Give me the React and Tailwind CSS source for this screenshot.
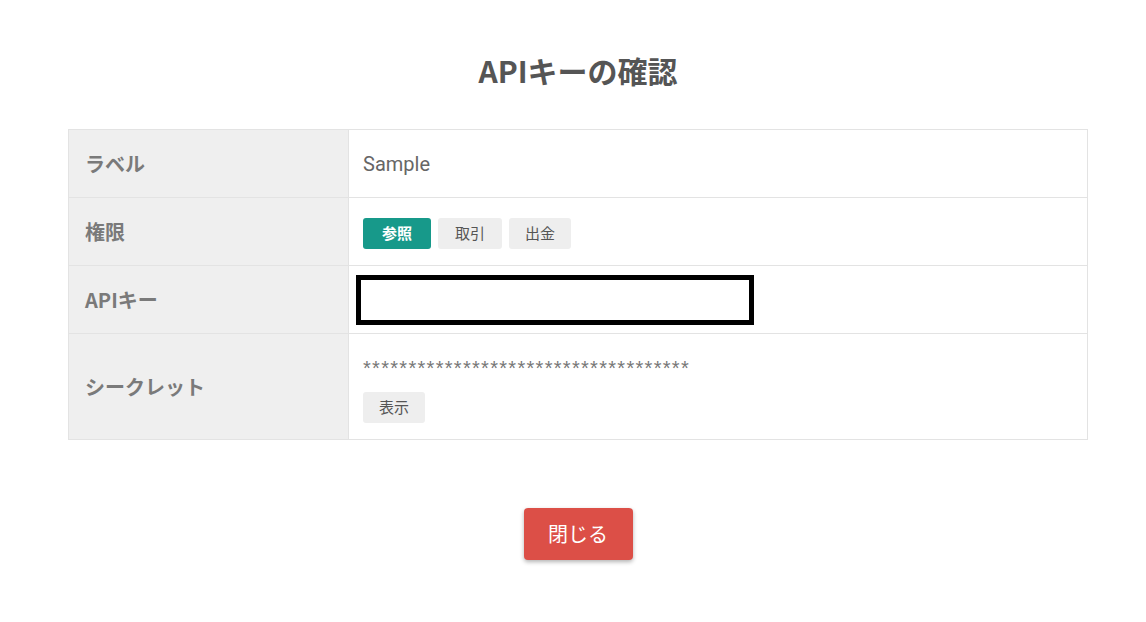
import React from 'react';

const font = { fontFamily: '"Noto Sans CJK JP", "Noto Sans", sans-serif' };

function Row({ label, children, h }) {
  return (
    <div className={`flex border-b border-[#e3e3e3] last:border-b-0 ${h}`}>
      <div className="w-[280px] shrink-0 bg-[#efefef] border-r border-[#e3e3e3] flex items-center pl-[16px] text-[20px] font-bold text-[#7a7a7a]">
        {label}
      </div>
      <div className="flex-1 flex items-center px-[14px]">{children}</div>
    </div>
  );
}

export default function App() {
  return (
    <div className="w-[1146px] h-[622px] bg-white" style={font}>
      <div className="ml-[68px] w-[1020px]">
        <h1 className="pt-[46px] text-center text-[30px] font-bold text-[#555] leading-[48px]">
          APIキーの確認
        </h1>

        <div className="mt-[35px] border border-[#e3e3e3]">
          <Row label="ラベル" h="h-[68px]">
            <span className="text-[20px] text-[#666]" style={{ fontFamily: 'Roboto, "Noto Sans CJK JP", sans-serif' }}>Sample</span>
          </Row>
          <Row label="権限" h="h-[68px]">
            <div className="flex gap-[7px] mt-[4px]">
              <span className="w-[68px] h-[31px] rounded-[3px] bg-[#17998a] text-white text-[15px] font-bold flex items-center justify-center">参照</span>
              <span className="w-[64px] h-[31px] rounded-[3px] bg-[#eeeeee] text-[#555] text-[15px] flex items-center justify-center">取引</span>
              <span className="w-[62px] h-[31px] rounded-[3px] bg-[#eeeeee] text-[#555] text-[15px] flex items-center justify-center">出金</span>
            </div>
          </Row>
          <Row label="APIキー" h="h-[68px]">
            <div className="-ml-[7px] w-[398px] h-[50px] border-[5px] border-black bg-white" />
          </Row>
          <Row label="シークレット" h="h-[105px]">
            <div className="flex flex-col items-start">
              <span className="text-[20px] text-[#777] leading-[22px] tracking-[1.3px] mt-[6px] -mb-[2px]" style={{ fontFamily: '"Liberation Sans", sans-serif' }}>
                ************************************
              </span>
              <span className="mt-[15px] w-[62px] h-[31px] rounded-[3px] bg-[#eeeeee] text-[#555] text-[15px] flex items-center justify-center">表示</span>
            </div>
          </Row>
        </div>

        <div className="flex justify-center mt-[68px]">
          <button className="w-[109px] h-[52px] rounded-[4px] bg-[#dc4f47] text-white text-[20px] shadow-[0_2px_4px_rgba(0,0,0,0.3)]">
            閉じる
          </button>
        </div>
      </div>
    </div>
  );
}
